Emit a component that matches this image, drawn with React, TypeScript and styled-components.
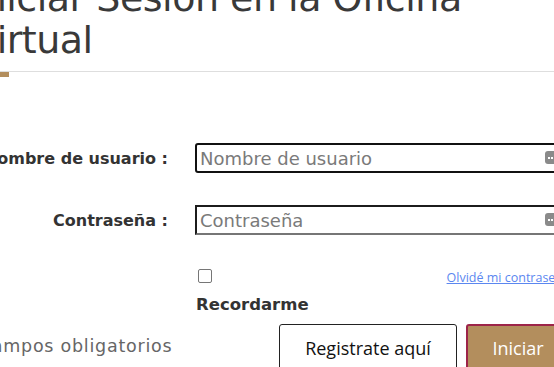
import * as React from 'react';
import styled, { createGlobalStyle } from 'styled-components';

const GlobalStyle = createGlobalStyle`
  html, body {
    margin: 0;
    padding: 0;
    background: #fff;
    overflow: hidden;
  }
`;

const MAIN_FONT = `"DejaVu Sans", "Noto Sans", sans-serif`;
const UI_FONT = `"Open Sans", "Noto Sans", sans-serif`;

const Page = styled.div`
  width: 598px;
  margin-left: -28px;
  font-family: ${MAIN_FONT};
  color: #333;
`;

const Title = styled.h1`
  margin: -23px 0 0 0;
  font-size: 38px;
  line-height: 42px;
  font-weight: 400;
  color: #393939;
  letter-spacing: -0.5px;
`;

const Divider = styled.div`
  margin-top: 10px;
  width: 640px;
  border-bottom: 1px solid #dedede;
`;

const Accent = styled.div`
  width: 37px;
  height: 5px;
  background: #b38e5d;
`;

const Form = styled.form`
  display: grid;
  grid-template-columns: 223px 1fr;
  row-gap: 32px;
  margin-top: 66px;
`;

const Label = styled.label`
  justify-self: end;
  align-self: center;
  padding-right: 27px;
  font-size: 16px;
  font-weight: 700;
  color: #333;
`;

const Field = styled.div`
  position: relative;
`;

const Input = styled.input<{ $focused?: boolean }>`
  box-sizing: border-box;
  width: 100%;
  height: 30px;
  padding: 0 3px;
  font-family: ${MAIN_FONT};
  font-size: 18px;
  color: #333;
  outline: none;
  border-radius: ${(p) => (p.$focused ? '3px' : '0')};
  border-style: solid;
  border-width: 2px;
  border-color: ${(p) => (p.$focused ? '#111' : '#1c1c1c #767676 #767676 #1c1c1c')};
  &::placeholder {
    color: #7a7a7a;
  }
`;

const FillIcon = styled.span`
  position: absolute;
  right: 12px;
  top: 50%;
  margin-top: -7px;
  width: 13px;
  height: 13px;
  border-radius: 3px;
  background: #8a8a8a;
  display: flex;
  align-items: center;
  justify-content: center;
  gap: 1px;
  & > i {
    width: 2px;
    height: 2px;
    background: #fff;
  }
`;

const Options = styled.div`
  grid-column: 2;
  margin-top: 2px;
`;

const OptionsTop = styled.div`
  display: flex;
  align-items: flex-end;
  justify-content: space-between;
`;

const Check = styled.span`
  box-sizing: border-box;
  width: 14px;
  height: 14px;
  margin-left: 3px;
  border: 1px solid #767676;
  border-radius: 2px;
  background: #fff;
`;

const Forgot = styled.a`
  font-family: ${UI_FONT};
  font-size: 12.5px;
  color: #5b87f0;
  text-decoration: underline;
  margin-bottom: -3px;
`;

const Remember = styled.div`
  margin-top: 12px;
  margin-left: 1px;
  font-size: 16.5px;
  font-weight: 700;
  color: #333;
`;

const Footer = styled.div`
  display: flex;
  align-items: flex-start;
  justify-content: space-between;
  margin-top: 10px;
`;

const Required = styled.div`
  margin-top: 12px;
  margin-left: -9px;
  font-size: 17.5px;
  letter-spacing: 0.75px;
  color: #666;
`;

const Actions = styled.div`
  display: flex;
  gap: 9px;
`;

const Button = styled.button<{ $primary?: boolean }>`
  box-sizing: border-box;
  height: 48px;
  padding: 0;
  font-family: ${UI_FONT};
  font-size: 18px;
  border-radius: 3px;
  width: ${(p) => (p.$primary ? '104px' : '178px')};
  background: ${(p) => (p.$primary ? '#b38e5d' : '#fff')};
  color: ${(p) => (p.$primary ? '#fff' : '#111')};
  border: ${(p) => (p.$primary ? '2px solid #9d2449' : '1px solid #222')};
`;

const Dots = () => (
  <FillIcon>
    <i />
    <i />
    <i />
  </FillIcon>
);

export default function App() {
  return (
    <Page>
      <GlobalStyle />
      <Title>
        Iniciar Sesión en la Oficina
        <br />
        Virtual
      </Title>
      <Divider />
      <Accent />
      <Form onSubmit={(e) => e.preventDefault()}>
        <Label htmlFor="usuario">Nombre de usuario :</Label>
        <Field>
          <Input id="usuario" $focused placeholder="Nombre de usuario" />
          <Dots />
        </Field>
        <Label htmlFor="pass">Contraseña :</Label>
        <Field>
          <Input id="pass" type="password" placeholder="Contraseña" />
          <Dots />
        </Field>
        <Options>
          <OptionsTop>
            <Check />
            <Forgot href="#">Olvidé mi contraseña</Forgot>
          </OptionsTop>
          <Remember>Recordarme</Remember>
        </Options>
      </Form>
      <Footer>
        <Required>* Campos obligatorios</Required>
        <Actions>
          <Button type="button">Registrate aquí</Button>
          <Button type="submit" $primary>
            Iniciar
          </Button>
        </Actions>
      </Footer>
    </Page>
  );
}
